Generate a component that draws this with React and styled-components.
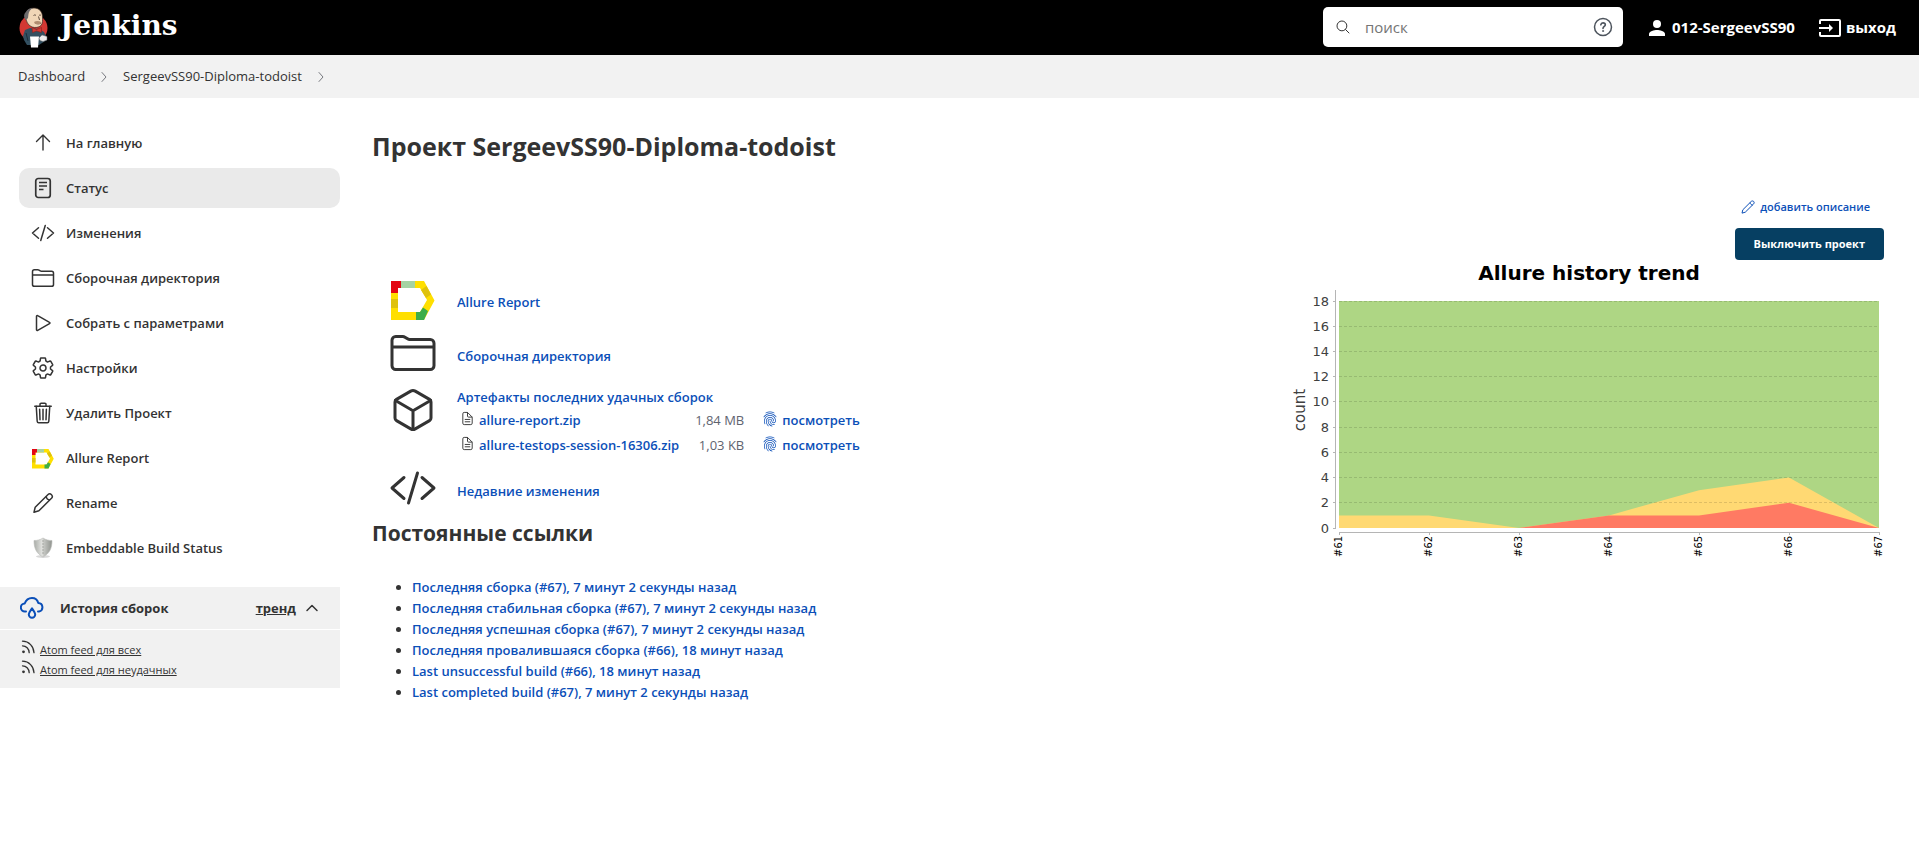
import React from "react";
import styled, { createGlobalStyle } from "styled-components";
import {
  IoCodeSlashOutline,
  IoCubeOutline,
  IoDocumentTextOutline,
  IoFingerPrintOutline,
  IoFolderOutline,
  IoSearchOutline,
  IoSettingsOutline,
  IoTrashOutline,
} from "react-icons/io5";

const color = {
  text: "#333333",
  link: "#0b4fb8",
  muted: "#5f6470",
  panel: "#f1f1f1",
  primary: "#063f62",
};

const GlobalStyle = createGlobalStyle`
  *, *::before, *::after { box-sizing: border-box; }
  body {
    margin: 0;
    background: #ffffff;
    color: ${color.text};
    font-family: "Open Sans", "Noto Sans", sans-serif;
    font-size: 13px;
    line-height: 21px;
  }
  svg { display: block; flex: none; }
`;

/* ---------- header ---------- */

const Header = styled.header`
  display: flex;
  align-items: center;
  height: 55px;
  padding: 0 23px 0 18px;
  background: #000000;
`;

const Brand = styled.a`
  display: flex;
  align-items: center;
  gap: 10px;
  margin-right: auto;
  color: #ffffff;
  text-decoration: none;
`;

const BrandName = styled.span`
  font: bold 28px/36px "DejaVu Serif", serif;
  margin-bottom: 4px;
`;

const SearchForm = styled.form`
  display: flex;
  align-items: center;
  gap: 14px;
  width: 300px;
  height: 40px;
  margin-bottom: 1px;
  padding: 0 10px 0 12px;
  border-radius: 5px;
  background: #ffffff;
  color: ${color.text};
`;

const SearchInput = styled.input`
  flex: 1;
  min-width: 0;
  padding: 0;
  border: 0;
  outline: 0;
  background: none;
  font: 15px/22px "Open Sans", sans-serif;
  color: ${color.text};
  &::placeholder { color: #757575; opacity: 1; }
`;

const IconLink = styled.a`
  display: flex;
  color: inherit;
`;

const HeaderLink = styled.a`
  display: flex;
  align-items: center;
  gap: ${(p) => p.$gap}px;
  margin-left: ${(p) => p.$space}px;
  color: #ffffff;
  font-size: 15px;
  font-weight: 700;
  text-decoration: none;
`;

/* ---------- breadcrumbs ---------- */

const Breadcrumbs = styled.nav`
  display: flex;
  align-items: center;
  gap: 15px;
  height: 43px;
  padding: 0 18px;
  background: #f2f2f2;
`;

const Crumb = styled.a`
  color: ${color.text};
  text-decoration: none;
`;

/* ---------- side panel ---------- */

const Page = styled.div`
  display: flex;
  align-items: flex-start;
`;

const Side = styled.aside`
  flex: none;
  width: 340px;
  padding-top: 25px;
`;

const Tasks = styled.nav`
  display: flex;
  flex-direction: column;
  gap: 5px;
  padding-left: 19px;
`;

const Task = styled.a`
  display: flex;
  align-items: center;
  gap: 11px;
  height: 40px;
  padding: 0 12px;
  border-radius: 10px;
  background: ${(p) => (p.$active ? "#eaeaea" : "transparent")};
  color: ${color.text};
  font-weight: 600;
  text-decoration: none;
`;

const TaskIcon = styled.span`
  display: flex;
  width: 24px;
  height: 24px;
`;

const History = styled.section`
  margin-top: 19px;
`;

const HistoryHead = styled.div`
  display: flex;
  align-items: center;
  height: 42px;
  padding: 0 21px 0 20px;
  background: ${color.panel};
`;

const HistoryTitle = styled.h2`
  margin: 0 auto 0 16px;
  font-size: 13px;
  line-height: 21px;
  font-weight: 700;
`;

const TrendLink = styled.a`
  margin-right: 9px;
  color: ${color.text};
  font-weight: 700;
`;

const Collapse = styled.button`
  display: flex;
  padding: 0;
  border: 0;
  background: none;
  color: ${color.text};
`;

const Feeds = styled.div`
  display: flex;
  flex-direction: column;
  margin-top: 1px;
  padding: 10px 20px 8px;
  background: ${color.panel};
`;

const FeedLink = styled.a`
  display: flex;
  align-items: flex-start;
  gap: 5px;
  color: ${color.text};
  font-size: 11px;
  line-height: 20px;
`;

/* ---------- main panel ---------- */

const Main = styled.main`
  flex: 1;
  min-width: 0;
  padding: 32px 35px 40px 32px;
`;

const Title = styled.h1`
  margin: 0;
  font-size: 25px;
  line-height: 32px;
  font-weight: 700;
`;

const Actions = styled.div`
  display: flex;
  flex-direction: column;
  align-items: flex-end;
  gap: 11px;
  margin-top: 35px;
`;

const DescriptionLink = styled.a`
  display: flex;
  align-items: center;
  gap: 4px;
  padding-right: 14px;
  color: ${color.link};
  font-size: 11px;
  line-height: 20px;
  font-weight: 600;
  text-decoration: none;
`;

const PrimaryButton = styled.button`
  height: 32px;
  padding: 0 19px;
  border: 0;
  border-radius: 4px;
  background: ${color.primary};
  color: #ffffff;
  font: 700 11px/20px "Open Sans", sans-serif;
`;

const Columns = styled.div`
  display: flex;
  align-items: flex-start;
  justify-content: space-between;
`;

const Info = styled.div`
  padding-top: 12px;
`;

const Links = styled.ul`
  display: flex;
  flex-direction: column;
  margin: 0;
  padding: 0 0 0 17px;
  list-style: none;
`;

const LinkRow = styled.li`
  display: flex;
  align-items: flex-start;
  gap: 20px;
  padding: ${(p) => (p.$detailed ? 6 : 3)}px 0 3px;
`;

const LinkText = styled.div`
  padding-top: ${(p) => (p.$compact ? 1 : 17)}px;
`;

const A = styled.a`
  color: ${color.link};
  font-weight: 600;
  text-decoration: none;
`;

const Files = styled.table`
  border-collapse: collapse;
`;

const Cell = styled.td`
  height: 25px;
  padding: 0 0 0 ${(p) => p.$left || 0}px;
  text-align: ${(p) => (p.$right ? "right" : "left")};
  color: ${color.muted};
  white-space: nowrap;
`;

const FileLink = styled(A)`
  display: flex;
  align-items: center;
  gap: 4px;
`;

const FileIcon = styled.span`
  display: flex;
  padding-bottom: 4px;
  color: ${(p) => (p.$dark ? color.text : color.link)};
`;

const Subtitle = styled.h2`
  margin: 4px 0 0;
  font-size: 21px;
  line-height: 28px;
  font-weight: 700;
`;

const Permalinks = styled.ul`
  margin: 30px 0 0;
  padding: 0 0 0 40px;
`;

/* ---------- drawings ---------- */

const Mascot = () => (
  <svg width="32" height="42" viewBox="0 0 32 42" aria-hidden="true">
    <ellipse cx="15.500" cy="21" rx="14" ry="13.500" fill="#d33833" />
    <path d="M5 29 7 23l5-2 9 1 5 3 2 4 1 4-5 3-3 2H9l-3-5z" fill="#335061" />
    <path d="M8 26l2 8" stroke="#1c2f3b" strokeWidth="1" fill="none" />
    <path d="M7.500 10C7 5 10 1 16 1c5.500 0 8.500 4 8.500 9 0 3 .5 6-1.500 8.500-2 2-6 2.500-9 1.500-4-1.500-6-6-6.500-10z" fill="#f0d6b7" stroke="#3a2a22" strokeWidth=".7" />
    <path d="M8 13C5.500 11 5.500 7 8 5c1-2.500 4-4 7-4-3 1.500-4 3.500-4.500 6L10 11z" fill="#6d6b6d" />
    <path d="M15.500 8.500c.8-.7 1.700-.7 2.500 0M21 8.500c.7-.6 1.400-.6 2 0M20.500 9.500l1 3.500M17 16c2 1.200 4 1.200 6 0" stroke="#3a2a22" strokeWidth=".8" fill="none" />
    <path d="M16 15c2-1.500 5-1.500 7 0l-1 2h-5z" fill="#b08d70" />
    <path d="M14 20.500l4.500 2 5-2v5l-5-1.500-4 1.500z" fill="#d33833" stroke="#81231f" strokeWidth=".6" />
    <path d="M12 29.500h9l-1 11h-7z" fill="#ffffff" />
    <path d="M21 31l3-3 5 1.500v3.500l-4 1.500-3-1z" fill="#ecebea" stroke="#6d6b6d" strokeWidth=".5" />
  </svg>
);

const AllureIcon = ({ size }) => (
  <svg width={size} height={size} viewBox="0 0 48 48" aria-hidden="true">
    <path d="M2 6h33l10.500 19.500L35 45H2zM9 13v24h22l7-12-7-12z" fill="#ffdf00" fillRule="evenodd" />
    <path d="M2 6h10v7H9v5H2z" fill="#e30613" />
    <path d="M12 6h14v7H12z" fill="#a5d3a3" />
    <path d="M2 24h7v9H2z" fill="#dfc20c" />
    <path d="M32 15l5.500-4 4.500 8.500-5 3.500z" fill="#dfc20c" />
    <path d="M27 37h4l3-4.500 5 3.500-4 9h-8z" fill="#3cad4a" />
  </svg>
);

const StatusIcon = () => (
  <svg width="24" height="24" viewBox="0 0 24 24" fill="none" stroke="currentColor" aria-hidden="true">
    <rect x="4.750" y="2.500" width="14.500" height="19" rx="2.500" strokeWidth="1.700" />
    <path d="M8 6.500h8M8 10h8M8 13.500h4.500" strokeWidth="1.500" />
  </svg>
);

const ArrowUpIcon = () => (
  <svg width="24" height="24" viewBox="0 0 24 24" fill="none" stroke="currentColor" strokeWidth="1.400" strokeLinecap="round" strokeLinejoin="round" aria-hidden="true">
    <path d="M5.500 10.500L12 4l6.500 6.500M12 4.500V19" />
  </svg>
);

const PlayIcon = () => (
  <svg width="24" height="24" viewBox="0 0 24 24" fill="none" stroke="currentColor" strokeWidth="1.500" strokeLinejoin="round" aria-hidden="true">
    <path d="M5.500 5.300c0-.7.700-1 1.200-.7l11.800 6.700c.6.300.6 1.100 0 1.400L6.700 19.400c-.5.300-1.200 0-1.200-.7z" />
  </svg>
);

const PencilIcon = ({ size }) => (
  <svg width={size} height={size} viewBox="0 0 24 24" fill="none" stroke="currentColor" strokeWidth="1.500" strokeLinejoin="round" aria-hidden="true">
    <path d="M3 21.200l1.200-5L16.800 3.700c1.100-1 2.700-1 3.700 0s1 2.500 0 3.600L7.900 19.800z" />
    <path d="M15.200 5.300c.2 2.200 1.700 3.600 3.800 3.700" />
  </svg>
);

const ShieldIcon = () => (
  <svg width="24" height="24" viewBox="0 0 24 24" aria-hidden="true">
    <defs>
      <linearGradient id="shield" x1="0" x2="1">
        <stop offset="0" stopColor="#a9aca7" />
        <stop offset=".45" stopColor="#e2e3e0" />
        <stop offset=".55" stopColor="#c4c6c2" />
        <stop offset="1" stopColor="#90938e" />
      </linearGradient>
    </defs>
    <ellipse cx="12" cy="20.500" rx="7" ry="1.500" fill="#d9d9d9" />
    <path d="M12 2c3 2 6 2.500 9 2.500 0 8-2.500 13-9 16.500C5.500 17.500 3 12.500 3 4.500c3 0 6-.5 9-2.500z" fill="url(#shield)" stroke="#b9bbb7" strokeWidth=".6" />
    <path d="M12 4v15" stroke="#9a9d98" strokeWidth=".8" strokeDasharray="2 1" />
  </svg>
);

const CloudIcon = () => (
  <svg width="24" height="24" viewBox="0 0 24 24" fill="none" stroke="#0b4fb8" strokeWidth="2" strokeLinecap="round" strokeLinejoin="round" aria-hidden="true">
    <path d="M6 15.500H5a4 4 0 0 1-.3-8C6 4 8.800 2 12 2s5.500 2 6.300 5a4.300 4.300 0 0 1 .7 8.500h-1" />
    <path d="M12 12.300c1.800 2.500 3.200 4.500 3.200 6.300a3.200 3.200 0 0 1-6.400 0c0-1.800 1.400-3.800 3.200-6.300z" />
  </svg>
);

const FeedIcon = () => (
  <svg width="15" height="15" viewBox="0 0 15 15" fill="none" stroke="currentColor" strokeWidth="1.300" strokeLinecap="round" aria-hidden="true">
    <circle cx="3.500" cy="11.800" r="1.400" fill="currentColor" stroke="none" />
    <path d="M2.500 5.800c3.700.1 6.500 3 6.700 6.900M2.500 1.200c6.500.2 11.200 5 11.500 11.500" />
  </svg>
);

const Chevron = ({ up }) => (
  <svg width={up ? 14 : 8} height={up ? 14 : 12} viewBox={up ? "0 0 14 14" : "0 0 8 12"} fill="none" stroke="currentColor" strokeLinecap="round" strokeLinejoin="round" aria-hidden="true">
    {up ? <path d="M2 9.500l5-5 5 5" strokeWidth="1.500" /> : <path d="M2 1.500l4 4.500-4 4.500" stroke="#77797f" />}
  </svg>
);

const HelpIcon = () => (
  <svg width="20" height="20" viewBox="0 0 20 20" fill="none" stroke="#4d545d" strokeWidth="1.500" strokeLinecap="round" aria-hidden="true">
    <circle cx="10" cy="10" r="8.500" />
    <path d="M7.800 7.800c.2-1.300 1-1.900 2.200-1.900s2.300.7 2.300 1.900c0 1.600-2.300 1.700-2.300 3.600" strokeWidth="1.600" />
    <circle cx="10" cy="14" r=".6" fill="#4d545d" strokeWidth=".7" />
  </svg>
);

const PersonIcon = () => (
  <svg width="16" height="16" viewBox="0 0 16 16" fill="#ffffff" aria-hidden="true">
    <circle cx="8" cy="4" r="4" />
    <path d="M0 16v-2c0-2.700 5.300-4 8-4s8 1.300 8 4v2z" />
  </svg>
);

const ExitIcon = () => (
  <svg width="22" height="18" viewBox="0 0 22 18" fill="none" stroke="#ffffff" strokeWidth="2" aria-hidden="true">
    <path d="M1 5V2a1 1 0 0 1 1-1h18a1 1 0 0 1 1 1v14a1 1 0 0 1-1 1H2a1 1 0 0 1-1-1v-3M0 9h12" />
    <path d="M10 5l4 4-4 4z" fill="#ffffff" stroke="none" />
  </svg>
);

/* ---------- trend chart ---------- */

const builds = [
  { id: "#61", failed: 0, broken: 1 },
  { id: "#62", failed: 0, broken: 1 },
  { id: "#63", failed: 0, broken: 0 },
  { id: "#64", failed: 1, broken: 0 },
  { id: "#65", failed: 1, broken: 2 },
  { id: "#66", failed: 2, broken: 2 },
  { id: "#67", failed: 0, broken: 0 },
];

const plot = { left: 55, right: 595, top: 41, bottom: 268, max: 18 };
const px = (i) => plot.left + (i * (plot.right - plot.left)) / (builds.length - 1);
const py = (v) => plot.bottom - (v * (plot.bottom - plot.top)) / plot.max;
const area = (value) =>
  [
    `${plot.left},${plot.bottom}`,
    ...builds.map((b, i) => `${px(i)},${py(value(b))}`),
    `${plot.right},${plot.bottom}`,
  ].join(" ");

const ChartSvg = styled.svg`
  font-family: "DejaVu Sans", sans-serif;
`;

const TrendChart = () => (
  <ChartSvg width="600" height="300" viewBox="0 0 600 300" role="img" aria-label="Allure history trend">
    <text x="305" y="20" textAnchor="middle" fontSize="20" fontWeight="700" fill="#000000">Allure history trend</text>
    <text transform="translate(21 150) rotate(-90)" textAnchor="middle" fontSize="15" fill="#404040">count</text>
    <polygon points={area(() => 18)} fill="#aed684" />
    <polygon points={area((b) => b.failed + b.broken)} fill="#ffd973" />
    <polygon points={area((b) => b.failed)} fill="#ff7a63" />
    {[0, 2, 4, 6, 8, 10, 12, 14, 16, 18].map((v) => {
      const y = Math.floor(py(v)) + 0.5;
      return (
        <g key={v}>
          {v > 0 && <path d={`M${plot.left} ${y}H${plot.right}`} stroke="#000000" strokeOpacity=".13" strokeDasharray="3 2" />}
          <path d={`M49 ${y}h3`} stroke="#b5b5b5" />
          <text x="45" y={y + 4} textAnchor="end" fontSize="13" fill="#404040">{v}</text>
        </g>
      );
    })}
    <path d={`M51.500 30V269M${plot.left} 272.500H596`} stroke="#b5b5b5" />
    {builds.map((b, i) => (
      <g key={b.id}>
        <path d={`M${px(i) + 0.5} 272v3`} stroke="#b5b5b5" />
        <text transform={`translate(${px(i) + 3} 297) rotate(-90)`} fontSize="10" fill="#000000">{b.id}</text>
      </g>
    ))}
  </ChartSvg>
);

/* ---------- content ---------- */

const tasks = [
  { label: "На главную", icon: <ArrowUpIcon /> },
  { label: "Статус", icon: <StatusIcon />, active: true },
  { label: "Изменения", icon: <IoCodeSlashOutline size={24} /> },
  { label: "Сборочная директория", icon: <IoFolderOutline size={24} /> },
  { label: "Собрать с параметрами", icon: <PlayIcon /> },
  { label: "Настройки", icon: <IoSettingsOutline size={24} /> },
  { label: "Удалить Проект", icon: <IoTrashOutline size={24} /> },
  { label: "Allure Report", icon: <AllureIcon size={24} /> },
  { label: "Rename", icon: <PencilIcon size={24} /> },
  { label: "Embeddable Build Status", icon: <ShieldIcon /> },
];

const files = [
  { name: "allure-report.zip", size: "1,84 MB" },
  { name: "allure-testops-session-16306.zip", size: "1,03 KB" },
];

const permalinks = [
  "Последняя сборка (#67), 7 минут 2 секунды назад",
  "Последняя стабильная сборка (#67), 7 минут 2 секунды назад",
  "Последняя успешная сборка (#67), 7 минут 2 секунды назад",
  "Последняя провалившаяся сборка (#66), 18 минут назад",
  "Last unsuccessful build (#66), 18 минут назад",
  "Last completed build (#67), 7 минут 2 секунды назад",
];

export default function App() {
  return (
    <>
      <GlobalStyle />
      <Header>
        <Brand href="#">
          <Mascot />
          <BrandName>Jenkins</BrandName>
        </Brand>
        <SearchForm role="search">
          <IoSearchOutline size={16} />
          <SearchInput type="text" placeholder="поиск" aria-label="поиск" />
          <IconLink href="#" aria-label="Справка">
            <HelpIcon />
          </IconLink>
        </SearchForm>
        <HeaderLink href="#" $gap={7} $space={26}>
          <PersonIcon />
          012-SergeevSS90
        </HeaderLink>
        <HeaderLink href="#" $gap={5} $space={24}>
          <ExitIcon />
          выход
        </HeaderLink>
      </Header>

      <Breadcrumbs>
        <Crumb href="#">Dashboard</Crumb>
        <Chevron />
        <Crumb href="#">SergeevSS90-Diploma-todoist</Crumb>
        <Chevron />
      </Breadcrumbs>

      <Page>
        <Side>
          <Tasks>
            {tasks.map((t) => (
              <Task key={t.label} href="#" $active={t.active}>
                <TaskIcon>{t.icon}</TaskIcon>
                {t.label}
              </Task>
            ))}
          </Tasks>
          <History>
            <HistoryHead>
              <CloudIcon />
              <HistoryTitle>История сборок</HistoryTitle>
              <TrendLink href="#">тренд</TrendLink>
              <Collapse type="button" aria-label="Свернуть">
                <Chevron up />
              </Collapse>
            </HistoryHead>
            <Feeds>
              <FeedLink href="#"><FeedIcon />Atom feed для всех</FeedLink>
              <FeedLink href="#"><FeedIcon />Atom feed для неудачных</FeedLink>
            </Feeds>
          </History>
        </Side>

        <Main>
          <Title>Проект SergeevSS90-Diploma-todoist</Title>
          <Actions>
            <DescriptionLink href="#">
              <PencilIcon size={16} />
              добавить описание
            </DescriptionLink>
            <PrimaryButton type="button">Выключить проект</PrimaryButton>
          </Actions>
          <Columns>
            <Info>
              <Links>
                <LinkRow>
                  <AllureIcon size={48} />
                  <LinkText><A href="#">Allure Report</A></LinkText>
                </LinkRow>
                <LinkRow>
                  <IoFolderOutline size={48} />
                  <LinkText><A href="#">Сборочная директория</A></LinkText>
                </LinkRow>
                <LinkRow $detailed>
                  <IoCubeOutline size={48} />
                  <LinkText $compact>
                    <A href="#">Артефакты последних удачных сборок</A>
                    <Files>
                      <tbody>
                        {files.map((f) => (
                          <tr key={f.name}>
                            <Cell $left={3}>
                              <FileLink href="#">
                                <FileIcon $dark><IoDocumentTextOutline size={15} /></FileIcon>
                                {f.name}
                              </FileLink>
                            </Cell>
                            <Cell $right $left={16}>{f.size}</Cell>
                            <Cell $left={18}>
                              <FileLink href="#">
                                <FileIcon><IoFingerPrintOutline size={16} /></FileIcon>
                                посмотреть
                              </FileLink>
                            </Cell>
                          </tr>
                        ))}
                      </tbody>
                    </Files>
                  </LinkText>
                </LinkRow>
                <LinkRow>
                  <IoCodeSlashOutline size={48} />
                  <LinkText><A href="#">Недавние изменения</A></LinkText>
                </LinkRow>
              </Links>
              <Subtitle>Постоянные ссылки</Subtitle>
              <Permalinks>
                {permalinks.map((p) => (
                  <li key={p}><A href="#">{p}</A></li>
                ))}
              </Permalinks>
            </Info>
            <TrendChart />
          </Columns>
        </Main>
      </Page>
    </>
  );
}
